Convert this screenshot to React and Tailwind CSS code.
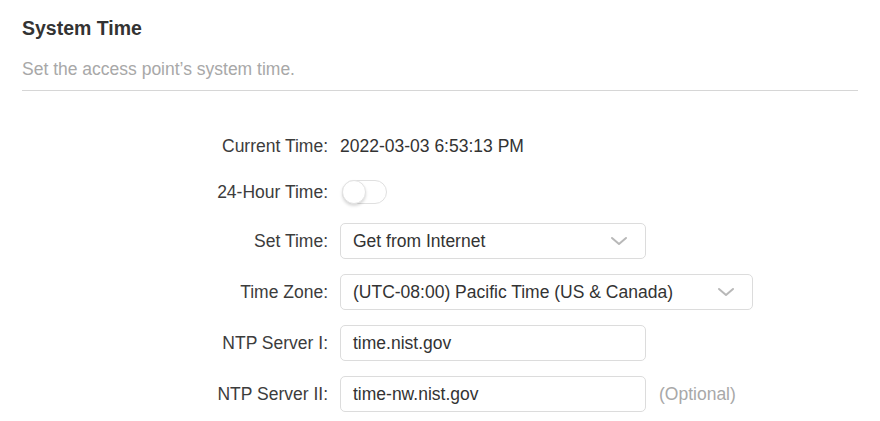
import React, { useState } from 'react';

const Chevron = () => (
  <svg width="20" height="12" viewBox="0 0 20 12" className="text-[#b8b8b8]">
    <path d="M3 3 L10 9 L17 3" fill="none" stroke="currentColor" strokeWidth="2" strokeLinecap="round" strokeLinejoin="round" />
  </svg>
);

const Row = ({ label, className = '', children }) => (
  <div className={`flex items-center h-[36px] ${className}`}>
    <div className="w-[306px] text-right text-[#3c3c3c]">{label}</div>
    <div className="ml-3 flex items-center">{children}</div>
  </div>
);

const Select = ({ value, width }) => (
  <div className={`${width} h-[36px] border border-[#dcdcdc] rounded-[5px] flex items-center justify-between pl-3 pr-4 text-[#333]`}>
    <span>{value}</span>
    <Chevron />
  </div>
);

const Input = ({ value }) => (
  <div className="w-[306px] h-[36px] border border-[#dcdcdc] rounded-[5px] flex items-center px-3 text-[#333]">
    {value}
  </div>
);

export default function App() {
  const [hour24, setHour24] = useState(false);

  return (
    <div className="w-[880px] h-[421px] bg-white px-[22px] pt-[16px] text-[17.5px] leading-[22px]" style={{ fontFamily: '"Liberation Sans", Arial, sans-serif' }}>
      {/* Header */}
      <div className="border-b border-[#d6d6d6] pb-[10px]">
        <h2 className="text-[19.5px] leading-[24px] font-bold text-[#333]">System Time</h2>
        <p className="mt-[18px] text-[#a8a8a8]">Set the access point’s system time.</p>
      </div>

      {/* Form */}
      <div className="mt-[37px]">
        <Row label="Current Time:">
          <span className="text-[#333]">2022-03-03 6:53:13 PM</span>
        </Row>

        <Row label="24-Hour Time:" className="mt-[10px]">
          <button
            onClick={() => setHour24(!hour24)}
            className={`relative ml-[2px] w-[45px] h-[24px] rounded-full border border-[#e0e0e0] ${hour24 ? 'bg-[#4acbd6]' : 'bg-white'}`}
          >
            <span className={`absolute top-[-1px] ${hour24 ? 'left-[20px]' : 'left-[-1px]'} w-[24px] h-[24px] rounded-full bg-white border border-[#e3e3e3] shadow-[0_2px_3px_rgba(0,0,0,0.15)]`} />
          </button>
        </Row>

        <Row label="Set Time:" className="mt-[13px]">
          <Select value="Get from Internet" width="w-[306px]" />
        </Row>

        <Row label="Time Zone:" className="mt-[15px]">
          <Select value="(UTC-08:00) Pacific Time (US & Canada)" width="w-[413px]" />
        </Row>

        <Row label="NTP Server I:" className="mt-[15px]">
          <Input value="time.nist.gov" />
        </Row>

        <Row label="NTP Server II:" className="mt-[15px]">
          <Input value="time-nw.nist.gov" />
          <span className="ml-[13px] text-[#a8a8a8]">(Optional)</span>
        </Row>
      </div>
    </div>
  );
}
